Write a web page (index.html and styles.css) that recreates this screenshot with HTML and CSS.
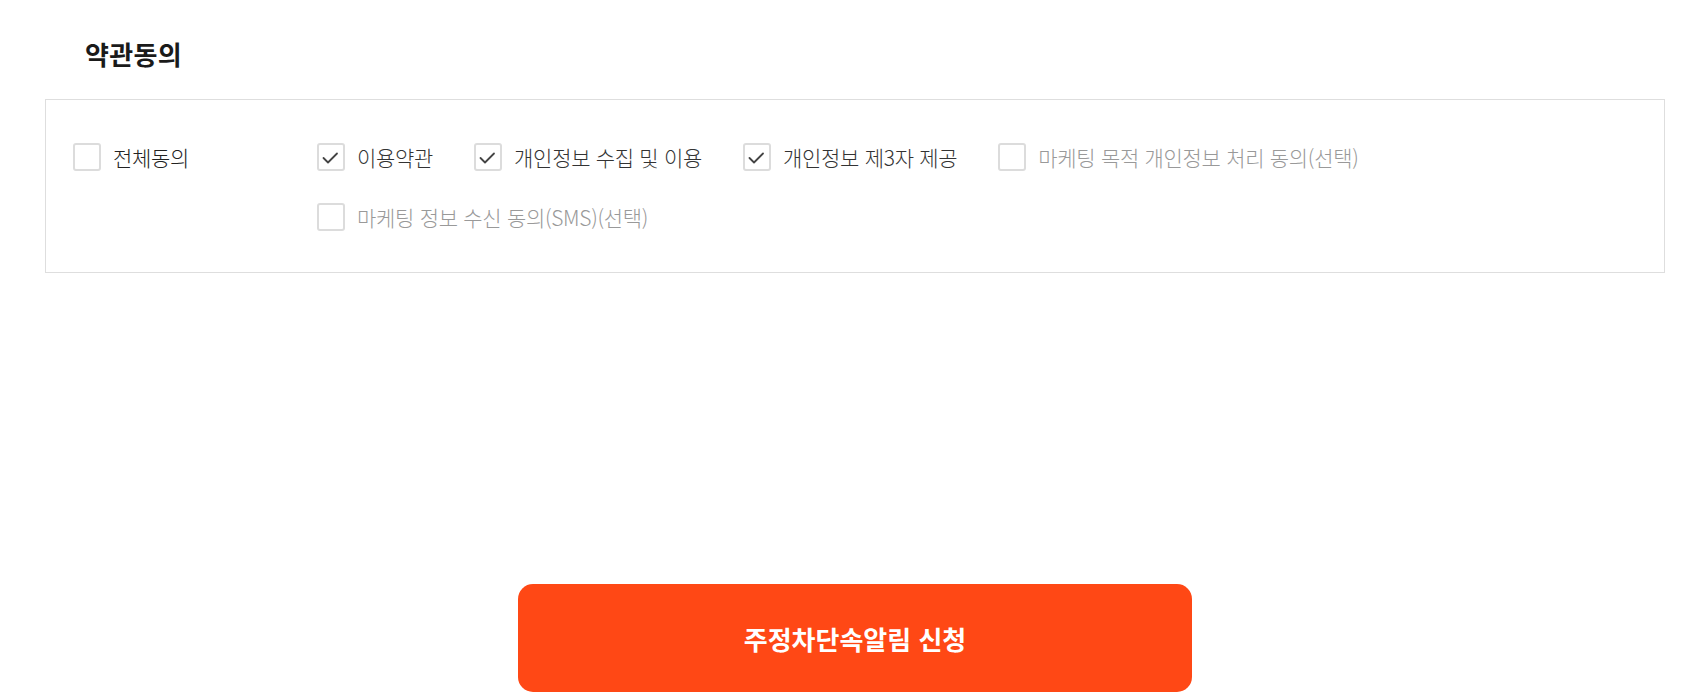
FILE: index.html
```html
<!DOCTYPE html>
<html lang="ko">
<head>
<meta charset="utf-8">
<title>약관동의</title>
<link rel="stylesheet" href="styles.css">
</head>
<body>
<main class="page">
  <h2 class="title">약관동의</h2>
  <div class="terms">
    <label class="check all">
      <span class="box"></span>
      <span class="label">전체동의</span>
    </label>
    <div class="items">
      <label class="check">
        <span class="box"><svg viewBox="0 0 28 28" width="28" height="28"><polyline points="6.5,15 11,19.5 20,10.5" fill="none" stroke="#444" stroke-width="1.8" stroke-linecap="round" stroke-linejoin="round"/></svg></span>
        <span class="label">이용약관</span>
      </label>
      <label class="check">
        <span class="box"><svg viewBox="0 0 28 28" width="28" height="28"><polyline points="6.5,15 11,19.5 20,10.5" fill="none" stroke="#444" stroke-width="1.8" stroke-linecap="round" stroke-linejoin="round"/></svg></span>
        <span class="label">개인정보 수집 및 이용</span>
      </label>
      <label class="check">
        <span class="box"><svg viewBox="0 0 28 28" width="28" height="28"><polyline points="6.5,15 11,19.5 20,10.5" fill="none" stroke="#444" stroke-width="1.8" stroke-linecap="round" stroke-linejoin="round"/></svg></span>
        <span class="label">개인정보 제3자 제공</span>
      </label>
      <label class="check optional">
        <span class="box"></span>
        <span class="label">마케팅 목적 개인정보 처리 동의(선택)</span>
      </label>
      <label class="check optional">
        <span class="box"></span>
        <span class="label">마케팅 정보 수신 동의(SMS)(선택)</span>
      </label>
    </div>
  </div>
  <div class="actions">
    <button class="submit" type="button">주정차단속알림 신청</button>
  </div>
</main>
</body>
</html>
```
FILE: styles.css
```css
html, body {
  margin: 0;
  padding: 0;
  background: #fff;
}
body {
  font-family: "Noto Sans CJK KR", "Noto Sans", sans-serif;
  color: #222;
}
.page {
  width: 1620px;
  margin-left: 45px;
  padding-top: 32px;
}
.title {
  margin: 0 0 23px 40px;
  font-size: 26px;
  font-weight: 700;
  line-height: 44px;
  color: #1a1a1a;
  letter-spacing: 0.3px;
}
.terms {
  display: flex;
  align-items: flex-start;
  border: 1px solid #dedede;
  padding: 42px 27px 41px;
}
.all {
  width: 244px;
  flex: none;
}
.items {
  display: flex;
  flex-wrap: wrap;
  column-gap: 41px;
  row-gap: 31px;
  flex: 1;
}
.check {
  display: flex;
  align-items: center;
  gap: 12px;
  height: 29px;
  cursor: pointer;
}
.box {
  width: 28px;
  height: 28px;
  box-sizing: border-box;
  border: 2px solid #dcdcdc;
  border-radius: 3px;
  background: #fff;
  flex: none;
  position: relative;
}
.box svg {
  position: absolute;
  left: -2px;
  top: -2px;
}
.label {
  font-size: 21px;
  font-weight: 300;
  line-height: 28px;
  color: #333;
  letter-spacing: -0.3px;
}
.all .label {
  color: #222;
}
.optional .label {
  color: #999;
}
.actions {
  display: flex;
  justify-content: center;
  margin-top: 311px;
}
.submit {
  width: 674px;
  height: 108px;
  border: none;
  border-radius: 15px;
  background: #ff4815;
  color: #fff;
  font-family: "Noto Sans CJK KR", "Noto Sans", sans-serif;
  font-size: 26px;
  font-weight: 700;
  letter-spacing: 0;
  padding: 0;
}
```
